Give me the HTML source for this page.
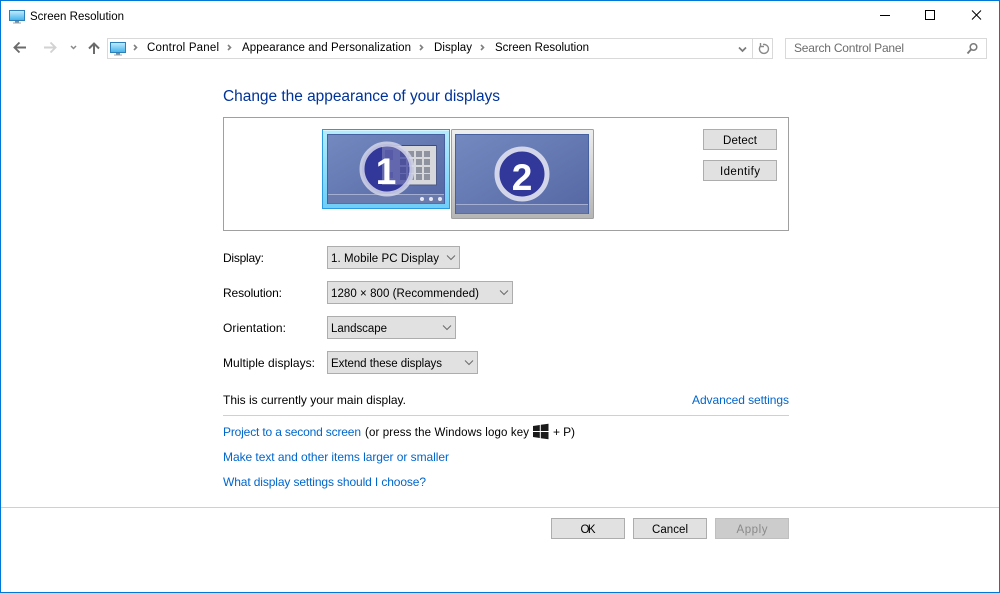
<!DOCTYPE html>
<html><head><meta charset="utf-8"><title>Screen Resolution</title>
<style>
html,body{margin:0;padding:0;background:#fff;width:1000px;height:593px;overflow:hidden}
svg{display:block}
text{font-family:"Liberation Sans",sans-serif;font-size:12px;fill:#000}
text.s{font-size:11.5px}
.l{fill:#0066cc}
.g{fill:#6d6d6d}
.b{fill:#e1e1e1;stroke:#adadad}
</style></head><body>
<svg width="1000" height="593" viewBox="0 0 1000 593" xmlns="http://www.w3.org/2000/svg">
<defs>
<linearGradient id="sc" x1="0" y1="0" x2="1" y2="1"><stop offset="0" stop-color="#7489c0"/><stop offset="1" stop-color="#5567a3"/></linearGradient>
<linearGradient id="ic" x1="0" y1="0" x2="0" y2="1"><stop offset="0" stop-color="#c8ecfd"/><stop offset="1" stop-color="#3fb2ec"/></linearGradient>
<linearGradient id="fr" x1="0" y1="0" x2="0" y2="1"><stop offset="0" stop-color="#eeeeee"/><stop offset="1" stop-color="#b5b5b5"/></linearGradient>
<linearGradient id="frb" x1="0" y1="0" x2="0" y2="1"><stop offset="0" stop-color="#b5ecfd"/><stop offset="1" stop-color="#6fcdf7"/></linearGradient>
</defs>
<rect x="0.5" y="0.5" width="999" height="592" fill="#fff" stroke="#0078d7"/>
<!-- title icon -->
<rect x="9.5" y="10.500" width="15" height="10" fill="url(#ic)" stroke="#2c7fb8"/>
<rect x="15" y="21" width="4" height="1.500" fill="#7a8a96"/><rect x="13" y="22.500" width="8" height="1" fill="#9aa5ad"/>
<text x="30" y="20" class="s" textLength="94" lengthAdjust="spacing">Screen Resolution</text>
<!-- window controls -->
<path d="M880 15.500h10" stroke="#000" fill="none"/>
<rect x="925.500" y="10.500" width="9" height="9" fill="none" stroke="#000"/>
<path d="M972 10.500l9 9M981 10.500l-9 9" stroke="#000" fill="none"/>
<!-- nav -->
<path d="M15 47.500h11M19.500 42.500l-5 5 5 5" stroke="#6b6b6b" stroke-width="1.900" fill="none"/>
<path d="M44 47.500h11M50.500 42.500l5 5-5 5" stroke="#d2d2d2" stroke-width="1.900" fill="none"/>
<path d="M71 46l2.500 2.500 2.500-2.500" stroke="#8a8a8a" stroke-width="1.500" fill="none"/>
<path d="M94 54V43.500M89 48.500l5-5 5 5" stroke="#6b6b6b" stroke-width="2" fill="none"/>
<!-- address bar -->
<rect x="107.500" y="38.500" width="665" height="20" fill="#fff" stroke="#d9d9d9"/>
<path d="M752.500 39v19" stroke="#d9d9d9"/>
<rect x="110.500" y="42.500" width="15" height="10" fill="url(#ic)" stroke="#2c7fb8"/>
<rect x="116" y="53" width="4" height="1.500" fill="#7a8a96"/><rect x="114" y="54.500" width="8" height="1" fill="#9aa5ad"/>
<path d="M134 45l2.500 2.500-2.500 2.500M228 45l2.500 2.500-2.500 2.500M420 45l2.500 2.500-2.500 2.500M481 45l2.500 2.500-2.500 2.500" stroke="#808080" stroke-width="1.600" fill="none"/>
<text x="147" y="51" class="s" textLength="72" lengthAdjust="spacing">Control Panel</text>
<text x="242" y="51" class="s" textLength="169" lengthAdjust="spacing">Appearance and Personalization</text>
<text x="434" y="51" class="s" textLength="38" lengthAdjust="spacing">Display</text>
<text x="495" y="51" class="s" textLength="94" lengthAdjust="spacing">Screen Resolution</text>
<path d="M739 47.500l3.500 3.500 3.500-3.500" stroke="#7a7a7a" stroke-width="1.700" fill="none"/>
<path d="M760.500 43v3.500h3.500M760.500 46a4.500 4.500 0 1 0 2.500-1.500" stroke="#8a8a8a" stroke-width="1.400" fill="none"/>
<!-- search -->
<rect x="785.500" y="38.500" width="201" height="20" fill="#fff" stroke="#d9d9d9"/>
<text x="794" y="52" class="g" textLength="110" lengthAdjust="spacing">Search Control Panel</text>
<circle cx="973.500" cy="47" r="3.300" fill="none" stroke="#7a7a7a" stroke-width="1.500"/>
<path d="M971 49.500l-3.500 4" stroke="#7a7a7a" stroke-width="1.900"/>
<!-- heading -->
<text x="223" y="101" textLength="277" lengthAdjust="spacing" style="font-size:15.5px;fill:#003399">Change the appearance of your displays</text>
<!-- group box -->
<rect x="223.500" y="117.500" width="565" height="113" fill="#fff" stroke="#a0a0a0"/>
<!-- monitor 2 -->
<rect x="451.500" y="129.500" width="142" height="89" rx="1" fill="url(#fr)" stroke="#a0a0a0"/>
<rect x="455.500" y="134.500" width="133" height="79" fill="url(#sc)" stroke="#47609f"/>
<rect x="456" y="204" width="132" height="9.500" fill="#6b7bae"/>
<path d="M456 204.500h132" stroke="#a3aed2"/>
<circle cx="522" cy="174" r="25" fill="#32379a" stroke="#d3d6ea" stroke-width="5"/>
<text x="522" y="190" text-anchor="middle" style="font-size:37px;font-weight:bold;fill:#fff">2</text>
<!-- monitor 1 -->
<rect x="322.500" y="129.500" width="127" height="79" fill="url(#frb)" stroke="#2a9be0"/>
<path d="M323 130.500h126" stroke="#d8f6ff"/>
<rect x="327.500" y="134.500" width="117" height="69" fill="url(#sc)" stroke="#47609f"/>
<rect x="328" y="194" width="116" height="9.500" fill="#6b7bae"/>
<path d="M328 194.500h116" stroke="#a3aed2"/>
<circle cx="422" cy="199" r="2" fill="#e6e8f2"/><circle cx="431" cy="199" r="2" fill="#e6e8f2"/><circle cx="440" cy="199" r="2" fill="#e6e8f2"/>
<circle cx="387" cy="169" r="25" fill="#32379a"/>
<!-- mini window -->
<rect x="382" y="145" width="55" height="40" fill="#d6d8dc"/>
<path d="M382 145.500h55" stroke="#3e4a78"/>
<path d="M436.500 145v40M397 185h40" stroke="#4d5a86" stroke-width="1"/>
<path d="M385 151h8M385 153h8M385 155h8M385 157h8M385 159h8M385 173h8M385 175h8M385 177h8" stroke="#6068a0" stroke-width="0.800"/>
<g fill="#8f929f">
<rect x="400" y="151" width="6" height="6"/><rect x="408" y="151" width="6" height="6"/><rect x="416" y="151" width="6" height="6"/><rect x="424" y="151" width="6" height="6"/>
<rect x="400" y="159" width="6" height="6"/><rect x="408" y="159" width="6" height="6"/><rect x="416" y="159" width="6" height="6"/><rect x="424" y="159" width="6" height="6"/>
<rect x="400" y="167" width="6" height="6"/><rect x="408" y="167" width="6" height="6"/><rect x="416" y="167" width="6" height="6"/><rect x="424" y="167" width="6" height="6"/>
<rect x="400" y="174" width="6" height="6"/><rect x="408" y="174" width="6" height="6"/><rect x="416" y="174" width="6" height="6"/><rect x="424" y="174" width="6" height="6"/>
</g>
<circle cx="387" cy="169" r="25" fill="#32379a" fill-opacity="0.700" stroke="#d3d6ea" stroke-opacity="0.850" stroke-width="5"/>
<text x="386" y="184" text-anchor="middle" style="font-size:37px;font-weight:bold;fill:#fff">1</text>
<!-- side buttons -->
<rect class="b" x="703.500" y="129.500" width="73" height="20"/>
<text x="740" y="144" class="s" text-anchor="middle" textLength="34" lengthAdjust="spacing">Detect</text>
<rect class="b" x="703.500" y="160.500" width="73" height="20"/>
<text x="740" y="175" class="s" text-anchor="middle" textLength="40" lengthAdjust="spacing">Identify</text>
<!-- labels -->
<text x="223" y="262" textLength="41" lengthAdjust="spacing">Display:</text>
<text x="223" y="297" textLength="59" lengthAdjust="spacing">Resolution:</text>
<text x="223" y="332" textLength="63" lengthAdjust="spacing">Orientation:</text>
<text x="223" y="367" textLength="92" lengthAdjust="spacing">Multiple displays:</text>
<!-- selects -->
<rect class="b" x="327.500" y="246.500" width="132" height="22"/>
<text x="331" y="262" class="s" textLength="108" lengthAdjust="spacing">1. Mobile PC Display</text>
<path d="M447 255.500l4 4 4-4" stroke="#6a6a6a" fill="none"/>
<rect class="b" x="327.500" y="281.500" width="185" height="22"/>
<text x="331" y="297" class="s" textLength="148" lengthAdjust="spacing">1280 × 800 (Recommended)</text>
<path d="M500 290.500l4 4 4-4" stroke="#6a6a6a" fill="none"/>
<rect class="b" x="327.500" y="316.500" width="128" height="22"/>
<text x="331" y="332" class="s" textLength="56" lengthAdjust="spacing">Landscape</text>
<path d="M443 325.500l4 4 4-4" stroke="#6a6a6a" fill="none"/>
<rect class="b" x="327.500" y="351.500" width="150" height="22"/>
<text x="331" y="367" class="s" textLength="111" lengthAdjust="spacing">Extend these displays</text>
<path d="M465 360.500l4 4 4-4" stroke="#6a6a6a" fill="none"/>
<!-- info -->
<text x="223" y="404" textLength="183" lengthAdjust="spacing">This is currently your main display.</text>
<text x="692" y="404" class="l" textLength="97" lengthAdjust="spacing">Advanced settings</text>
<path d="M223 415.500h566" stroke="#d0d0d0"/>
<text x="223" y="436" class="l" textLength="138" lengthAdjust="spacing">Project to a second screen</text>
<text x="365" y="436" class="s" textLength="164" lengthAdjust="spacing">(or press the Windows logo key</text>
<path d="M533 426l6.800-1v6h-6.800zM540.800 424.800l7.700-1v7.200h-7.700zM533 432h6.800v6l-6.800-1zM540.800 432h7.700v7.200l-7.700-1z" fill="#1a1a1a"/>
<text x="553" y="436" textLength="22" lengthAdjust="spacing">+ P)</text>
<text x="223" y="461" class="l" textLength="226" lengthAdjust="spacing">Make text and other items larger or smaller</text>
<text x="223" y="486" class="l" textLength="203" lengthAdjust="spacing">What display settings should I choose?</text>
<!-- footer -->
<path d="M1 507.500h998" stroke="#d0d0d0"/>
<rect class="b" x="551.500" y="518.500" width="73" height="20"/>
<text x="588" y="533" class="s" text-anchor="middle" textLength="15" lengthAdjust="spacing">OK</text>
<rect class="b" x="633.500" y="518.500" width="73" height="20"/>
<text x="670" y="533" class="s" text-anchor="middle" textLength="36" lengthAdjust="spacing">Cancel</text>
<rect x="715.500" y="518.500" width="73" height="20" fill="#cccccc" stroke="#bfbfbf"/>
<text x="752" y="533" class="s" text-anchor="middle" textLength="31" lengthAdjust="spacing" style="fill:#8a8a8a">Apply</text>
</svg>
</body></html>
